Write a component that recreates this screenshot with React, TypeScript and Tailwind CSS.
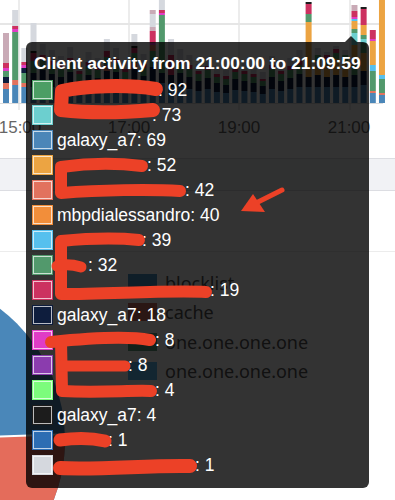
const B = "#4a86b8";
const N = "#0e1d3d";
const S = "#e2725e";
const G = "#52996c";
const C = "#cc3160";
const M = "#e03cc6";
const O = "#eca442";
const T = "#6ccfcf";
const L = "#d5d8de";
const P = "#c9aab6";
const K = "#1c1c1c";
const Y = "#56c0ee";

type Seg = [string, number];

// plain stack for the small bars hidden behind the tooltip
function stack(total: number): Seg[] {
  const b = Math.round(total * 0.3);
  const n = Math.round(total * 0.25);
  const g = Math.round(total * 0.17);
  const c = Math.round(total * 0.08);
  return [[B, b], [N, n], [G, g], [C, c], [L, total - b - n - g - c]];
}

const bars: Seg[][] = [
  [[B, 14], [S, 6], [N, 6], [G, 6], [M, 3], [C, 5], [P, 30]],
  [[B, 18], [S, 5], [G, 48], [M, 3], [C, 3], [L, 16]],
  [[B, 16], [S, 4], [G, 10], [N, 5], [M, 3], [C, 3], [L, 14]],
  [[B, 16], [N, 14], [G, 12], [C, 8], [K, 2], [L, 28]],
  stack(59),
  stack(53),
  stack(47),
  stack(56),
  stack(41),
  stack(51),
  stack(45),
  [[B, 18], [N, 14], [S, 6], [G, 8], [C, 6], [L, 12]],
  stack(55),
  stack(43),
  [[B, 18], [N, 16], [S, 6], [G, 10], [C, 5], [K, 2], [L, 12]],
  stack(49),
  [[B, 20], [N, 16], [G, 16], [S, 6], [M, 2], [C, 12], [P, 4], [L, 13], [P, 4]],
  [[B, 20], [N, 10], [G, 58], [M, 2], [C, 3], [L, 10]],
  [[B, 16], [N, 12], [C, 20], [L, 16]],
  stack(54),
  stack(48),
  stack(39),
  stack(45),
  stack(37),
  stack(33),
  stack(43),
  stack(41),
  stack(35),
  stack(31),
  stack(47),
  stack(41),
  stack(45),
  stack(53),
  [[B, 16], [N, 10], [O, 55], [G, 8], [C, 10], [K, 2]],
  [[B, 16], [N, 12], [O, 14], [G, 6], [L, 7]],
  [[B, 16], [N, 10], [O, 12], [G, 6], [C, 4], [L, 3]],
  [[B, 16], [N, 12], [O, 16], [G, 6], [C, 4], [L, 3]],
  [[B, 16], [N, 10], [O, 16], [G, 6], [L, 5]],
  [[B, 16], [N, 12], [G, 10], [O, 20], [T, 12], [G, 4], [O, 8], [Y, 2], [M, 2], [C, 6], [P, 6]],
  [[B, 18], [N, 14], [O, 18], [G, 10], [T, 4], [G, 4], [O, 10], [C, 16], [K, 2]],
  [[B, 10], [S, 2], [G, 20], [Y, 6], [O, 24], [M, 2], [C, 9]],
  [[B, 8], [S, 2], [G, 14], [Y, 4], [O, 75]],
];

const rows: { color: string; name?: string; hidden?: number; value: string }[] = [
  { color: "#4c9e64", hidden: 101, value: "92" },
  { color: "#6ccfcf", hidden: 95, value: "73" },
  { color: "#4b86b8", name: "galaxy_a7", value: "69" },
  { color: "#eca442", hidden: 90, value: "52" },
  { color: "#e2725e", hidden: 128, value: "42" },
  { color: "#f28e3a", name: "mbpdialessandro", value: "40" },
  { color: "#56c0ee", hidden: 85, value: "39" },
  { color: "#52996c", hidden: 31, value: "32" },
  { color: "#cc3160", hidden: 153, value: "19" },
  { color: "#0e1d3d", name: "galaxy_a7", value: "18" },
  { color: "#e03cc6", hidden: 98, value: "8" },
  { color: "#8b3cae", hidden: 71, value: "8" },
  { color: "#7cfc7c", hidden: 98, value: "4" },
  { color: "#1c1c1c", name: "galaxy_a7", value: "4" },
  { color: "#2c6db3", hidden: 51, value: "1" },
  { color: "#d5d8de", hidden: 138, value: "1" },
];

const legend = [
  { color: "#4b96c8", label: "blocklist" },
  { color: "#d27364", label: "cache" },
  { color: "#64a082", label: "one.one.one.one" },
  { color: "#5fbef5", label: "one.one.one.one" },
];

function ActivityChart() {
  return (
    <svg width="395" height="140" className="block">
      <line x1="0" y1="24" x2="383" y2="24" stroke="#e6e6e6" strokeWidth="2" />
      {[19, 129, 239, 350].map((x) => (
        <line key={x} x1={x} y1="0" x2={x} y2="110" stroke="#e6e6e6" strokeWidth="1.5" />
      ))}
      {bars.map((segs, i) => {
        const x = 3 + i * 9.17;
        let y = 103;
        return (
          <g key={i}>
            {segs.map(([color, h], j) => {
              y -= h;
              return <rect key={j} x={x} y={y} width="6" height={h} fill={color} />;
            })}
          </g>
        );
      })}
      <line x1="0" y1="103.5" x2="383" y2="103.5" stroke="#dcdcdc" strokeWidth="1" />
      {[
        [20, "15:00"],
        [129, "17:00"],
        [239, "19:00"],
        [349, "21:00"],
      ].map(([x, t]) => (
        <text
          key={t}
          x={x}
          y="133"
          textAnchor="middle"
          fill="#666"
          fontSize="17"
          fontFamily="'Liberation Sans', Arial, sans-serif"
        >
          {t}
        </text>
      ))}
    </svg>
  );
}

function Pie() {
  // center sits off the left edge; only a slice of the pie is on screen
  const cx = -100;
  const cy = 188;
  const r = 165;
  const a1 = (-2 * Math.PI) / 180;
  const a2 = (120 * Math.PI) / 180;
  const p1 = [cx + r * Math.cos(a1), cy + r * Math.sin(a1)];
  const p2 = [cx + r * Math.cos(a2), cy + r * Math.sin(a2)];
  return (
    <svg width="120" height="248" className="block shrink-0">
      <circle cx={cx} cy={cy} r={r} fill="#4a87b9" />
      <path d={`M${cx} ${cy} L${p1[0]} ${p1[1]} A${r} ${r} 0 0 1 ${p2[0]} ${p2[1]} Z`} fill="#e46c5b" />
      <line x1={cx} y1={cy} x2={p1[0]} y2={p1[1]} stroke="#fff" strokeWidth="2" />
    </svg>
  );
}

function Tooltip() {
  return (
    <div className="absolute left-[26px] top-[42px] w-[343px] h-[446px] rounded-[6px] bg-black/80 pt-[11px] font-['Liberation_Sans',Arial,sans-serif]">
      <div className="absolute -top-[6px] left-[319px] w-0 h-0 border-x-[6px] border-x-transparent border-b-[6px] border-b-black/80" />
      <div className="pl-[8px] mb-[4.5px] text-[17.4px] leading-[20px] font-bold text-white whitespace-nowrap">
        Client activity from 21:00:00 to 21:09:59
      </div>
      <div className="pl-[6px]">
        {rows.map((row, i) => (
          <div key={i} className="flex h-[25px] items-center">
            <div className="w-[21px] h-[20px] p-px" style={{ backgroundColor: row.color }}>
              <div className="h-full w-full border border-white/70" style={{ backgroundColor: row.color }} />
            </div>
            <div className="ml-[4px] flex text-[17.5px] leading-[20px] text-white whitespace-nowrap">
              {row.name ? <span>{row.name}</span> : <span className="inline-block" style={{ width: row.hidden }} />}
              <span>: {row.value}</span>
            </div>
          </div>
        ))}
      </div>
    </div>
  );
}

function Scribbles() {
  return (
    <svg width="395" height="500" className="absolute inset-0 pointer-events-none">
      <g fill="none" stroke="#ec4127" strokeLinecap="round" strokeLinejoin="round">
        <path strokeWidth="14" d="M156 89 C 125 84, 85 86, 62 91 L 61 110 C 95 114, 130 112, 153 110" />
        <path strokeWidth="12" d="M142 166 C 110 162, 82 164, 61 167 L 61 193 C 100 190, 150 189, 180 191" />
        <path strokeWidth="12" d="M139 240 C 110 237, 82 239, 61 241 L 61 294 C 110 294, 170 290, 206 292" />
        <path strokeWidth="11" d="M57 266 C 65 264, 74 265, 81 267" />
        <path strokeWidth="12" d="M51 342 C 90 338, 128 336, 150 340 M61 341 L 62 391 C 100 393, 132 390, 151 391" />
        <path strokeWidth="11" d="M62 366 L 125 366" />
        <path strokeWidth="13" d="M60 440 C 75 438, 92 438, 105 441" />
        <path strokeWidth="14" d="M60 468 C 100 470, 150 465, 190 466" />
        <path strokeWidth="5" d="M282 190 L 254 204" />
        <path fill="#ec4127" stroke="none" d="M241 211 L 253 194 L 265 212 Z" />
      </g>
    </svg>
  );
}

export default function App() {
  return (
    <div className="relative w-[395px] h-[500px] overflow-hidden bg-white">
      <ActivityChart />
      <div className="mt-[18px] h-[33px] border-y border-[#dcdde2] bg-[#f1f2f5]" />
      <div className="mt-[60px] border-t border-[#ececec]" />
      <div className="flex">
        <Pie />
        <div className="ml-[8px] pt-[16px] flex flex-col font-['Noto_Sans',sans-serif]">
          {legend.map((item, i) => (
            <div key={i} className="flex h-[29.5px] items-center">
              <div className="w-[29px] h-[18px]" style={{ backgroundColor: item.color }} />
              <span className="ml-[8px] text-[18px] leading-[24px] text-[#555]">{item.label}</span>
            </div>
          ))}
        </div>
      </div>
      <Tooltip />
      <Scribbles />
    </div>
  );
}
